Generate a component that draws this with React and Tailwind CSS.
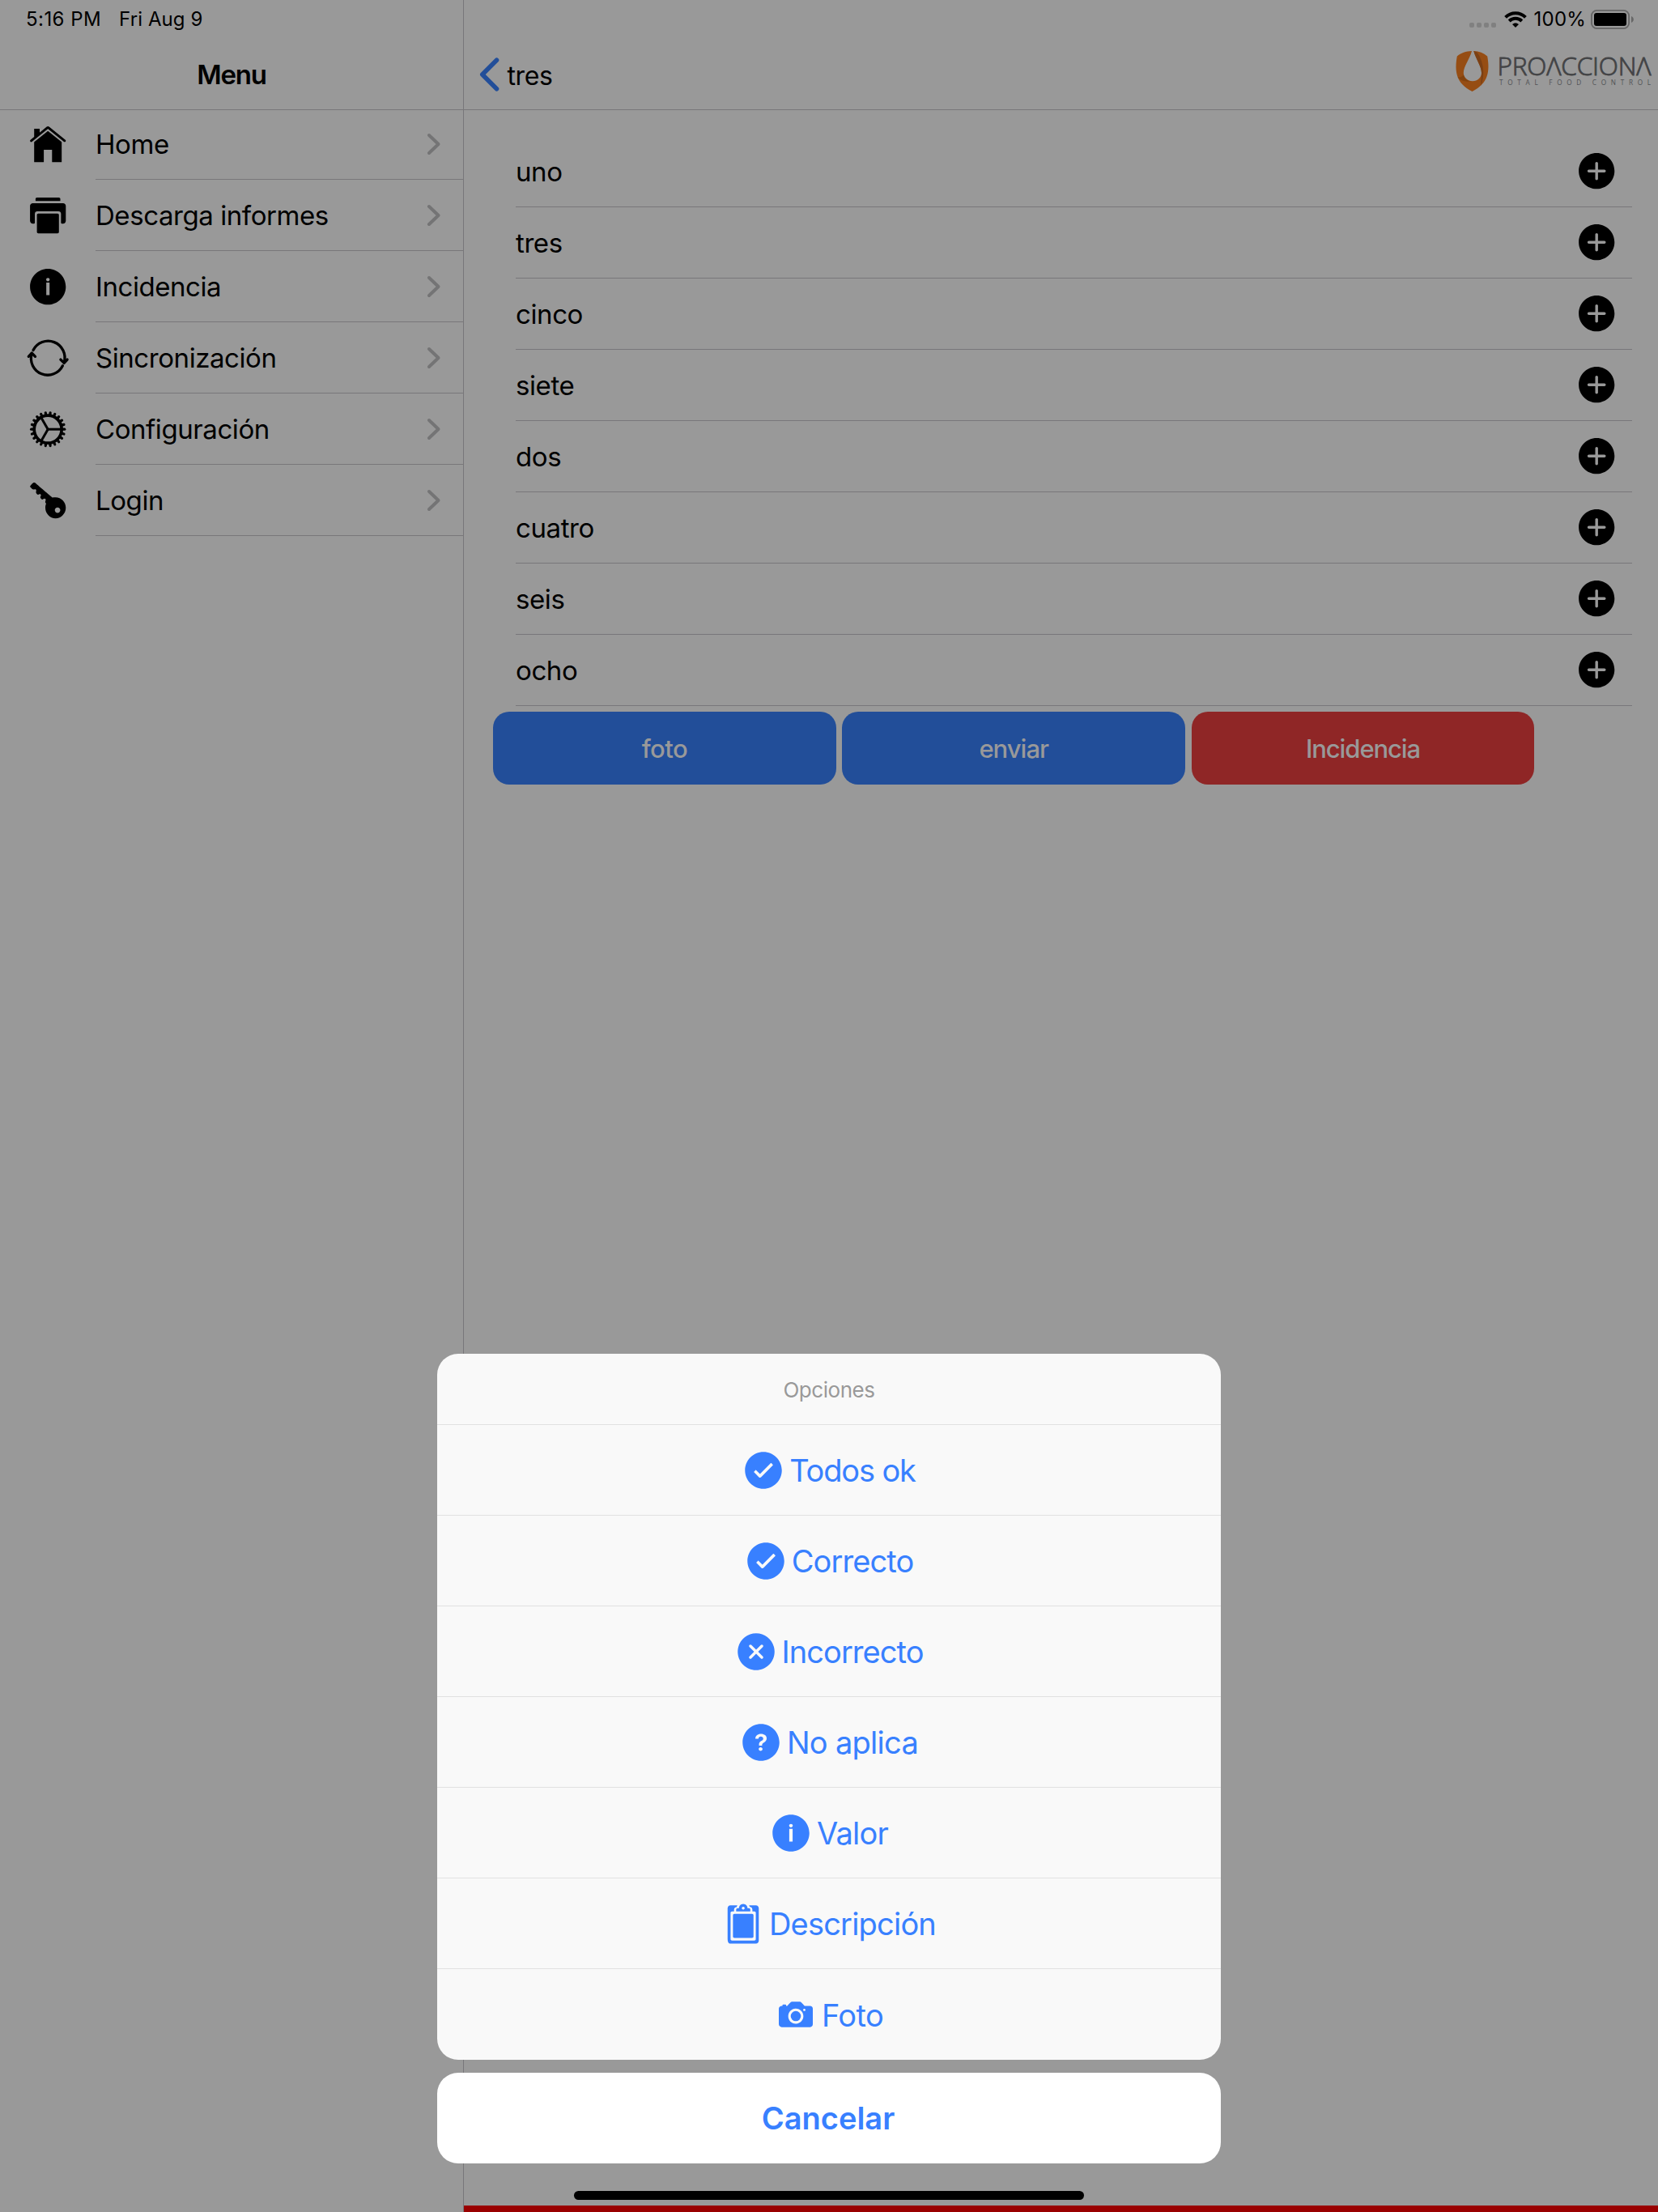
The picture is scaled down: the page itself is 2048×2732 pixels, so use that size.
import React from "react";
import {
  IoIosHome, IoIosPrint, IoIosInformationCircle, IoIosKey,
  IoIosAddCircle, IoIosCheckmarkCircle, IoIosCloseCircle, IoIosHelpCircle, IoIosClipboard, IoIosCamera,
} from "react-icons/io";

function SyncIcon({ className }) {
  return (
    <svg className={className} viewBox="-27.2 -27.2 54.4 54.4" fill="none" stroke="currentColor" strokeWidth="3.300" strokeLinecap="round" strokeLinejoin="round">
      <path d="M-18.200 -9.600A20.600 20.600 0 0 1 20 5.400" />
      <path d="M15.700 1.900L20 6.200L23.900 1.900" />
      <path d="M18.200 9.600A20.600 20.600 0 0 1 -20 -5.400" />
      <path d="M-15.700 -1.900L-20 -6.200L-23.900 -1.900" />
    </svg>
  );
}

const TEETH = Array.from({ length: 22 }, (_, n) => (n * 360) / 22);

function GearIcon({ className }) {
  return (
    <svg className={className} viewBox="-27.2 -27.2 54.4 54.4" fill="none" stroke="currentColor">
      <circle r="17" strokeWidth="3.700" />
      {TEETH.map((a) => (
        <path key={a} d="M18 0H20.600" strokeWidth="3.200" strokeLinecap="round" transform={`rotate(${a})`} />
      ))}
      {[0, 120, 240].map((a) => (
        <path key={a} d="M0 0H17" strokeWidth="3" transform={`rotate(${a})`} />
      ))}
    </svg>
  );
}

const menu = [
  { label: "Home", icon: IoIosHome },
  { label: "Descarga informes", icon: IoIosPrint },
  { label: "Incidencia", icon: IoIosInformationCircle },
  { label: "Sincronización", icon: SyncIcon },
  { label: "Configuración", icon: GearIcon },
  { label: "Login", icon: IoIosKey },
];
const items = ["uno", "tres", "cinco", "siete", "dos", "cuatro", "seis", "ocho"];
const buttons = [
  { label: "foto", look: "bg-[#224e99] tracking-[-0.6px]" },
  { label: "enviar", look: "bg-[#224e99] tracking-[-1px]" },
  { label: "Incidencia", look: "bg-[#8f2626] tracking-[-1.1px]" },
];
const options = [
  { label: "Todos ok", icon: IoIosCheckmarkCircle, track: "tracking-[-1.15px]" },
  { label: "Correcto", icon: IoIosCheckmarkCircle, track: "tracking-[-0.9px]" },
  { label: "Incorrecto", icon: IoIosCloseCircle, track: "tracking-[-0.95px]" },
  { label: "No aplica", icon: IoIosHelpCircle, track: "tracking-[-0.7px]" },
  { label: "Valor", icon: IoIosInformationCircle, track: "tracking-[-0.8px]" },
  { label: "Descripción", icon: IoIosClipboard, track: "tracking-[-0.8px]" },
  { label: "Foto", icon: IoIosCamera, track: "tracking-[-0.6px]" },
];

function Logo() {
  return (
    <svg className="mt-[15px] h-[52px] w-[250px] shrink-0 overflow-visible" viewBox="0 0 250 52" aria-label="PROACCIONA">
      <path d="M20 0C13 .2 6.500 2.500 1.800 6.500C-1.500 25 .5 40 20.500 50C40.500 40 42.500 25 39.200 6.500C34.500 2.500 29 .2 22.300 0C25 10 32 19 32 27C32 33 27 37.200 21 37.200C15 37.200 9.800 33 9.800 27C9.800 19 17.500 10 20 0Z" fill="#964d13" />
      <path d="M22.300 0C25 10 32 19 32 27C32 30 31.300 32.500 31.200 43C36.500 31 35 13 26.500 1.500Z" fill="#7b4014" />
      <path d="M2.500 32C6 37 13 38.500 19 37.200C14.500 37 10.500 33.500 9.900 29C9 31 6 33.500 2.500 32Z" fill="#82430f" />
      <text x="51.500" y="29.500" textLength="190" fontSize="31.500" fontWeight="300" fontFamily="'Open Sans', 'Noto Sans', sans-serif" fill="#434446" stroke="#434446" strokeWidth=".9">PROΛCCIONΛ</text>
      <text x="54" y="42" textLength="187" fontSize="8.200" fontFamily="'Open Sans', 'Noto Sans', sans-serif" fill="#505154">TOTAL FOOD CONTROL</text>
    </svg>
  );
}

export default function App() {
  return (
    <div className="relative flex h-[2732px] w-[2048px] overflow-hidden bg-[#999] font-['Inter',sans-serif] text-black">
      <aside className="flex w-[573px] shrink-0 flex-col border-r border-[#78777a]">
        <header className="flex h-[136px] flex-col border-b border-[#78777a]">
          <div className="flex h-12 items-center gap-[22px] pl-8 text-[24px]">
            <span className="tracking-[0.45px]">5:16 PM</span>
            <span className="tracking-[0.1px]">Fri Aug 9</span>
          </div>
          <h1 className="flex h-[87px] items-center justify-center pt-[2px] text-[33px] font-semibold tracking-[-1.2px]">Menu</h1>
        </header>
        <nav className="-mt-[2px]">
          {menu.map(({ label, icon: Icon }) => (
            <div key={label} className="flex h-[88px] items-center pl-8">
              <Icon className="size-[54.4px] shrink-0" />
              <div className="ml-[31.600px] flex h-full grow items-center justify-between border-b border-[#78777a] pr-[26px]">
                <span className="pt-[2px] text-[33px] tracking-[-0.43px]">{label}</span>
                <svg className="h-[30px] w-5" viewBox="0 0 20 30" fill="none" stroke="#747475" strokeWidth="4" strokeLinecap="round" strokeLinejoin="round">
                  <path d="M4 4L15.500 15L4 26" />
                </svg>
              </div>
            </div>
          ))}
        </nav>
      </aside>

      <main className="flex grow flex-col">
        <header className="flex h-[136px] flex-col border-b border-[#78777a]">
          <div className="flex h-12 items-center justify-end pr-[29px]">
            <div className="mt-[14px] mr-[10px] flex gap-[3px]">
              {[0, 1, 2, 3].map((n) => <i key={n} className="size-[6px] rounded-[2px] bg-[#808080]" />)}
            </div>
            <svg className="h-[20px] w-[28px]" viewBox="0 0 28 20" fill="none" stroke="black" strokeWidth="4">
              <path d="M1.600 7.300C8.500 .5 19.500 .5 26.400 7.300" />
              <path d="M6.200 12C10.500 7.800 17.500 7.800 21.800 12" />
              <path d="M10 16.100C12.300 14 15.700 14 18 16.100L14 20Z" fill="black" stroke="none" />
            </svg>
            <span className="ml-[9px] text-[24px] tracking-[0.2px]">100%</span>
            <svg className="ml-[6px] h-6 w-[54px]" viewBox="0 0 54 24">
              <rect x=".9" y=".9" width="46.200" height="22.200" rx="6.500" fill="none" stroke="#666" strokeWidth="1.800" />
              <rect x="4" y="4" width="40" height="16" rx="3" fill="black" />
              <path d="M50 8c3.800 1.500 3.800 6.500 0 8Z" fill="#666" />
            </svg>
          </div>
          <div className="flex h-[87px] justify-between">
            <div className="flex items-center pl-[18px]">
              <svg className="h-[44px] w-[28px]" viewBox="0 0 28 44" fill="none" stroke="#224e99" strokeWidth="5.600" strokeLinecap="round" strokeLinejoin="round">
                <path d="M22.500 4.300L4.800 22L22.500 39.700" />
              </svg>
              <span className="ml-[7.500px] pt-[4px] text-[32px] tracking-[-0.4px]">tres</span>
            </div>
            <Logo />
          </div>
        </header>
        <section className="mt-8 pl-16 pr-8">
          {items.map((label) => (
            <div key={label} className="flex h-[88px] items-center justify-between border-b border-[#78777a] pr-[16.500px]">
              <span className="pt-[2px] text-[33px] tracking-[-0.4px]">{label}</span>
              <IoIosAddCircle className="size-[54.4px]" />
            </div>
          ))}
        </section>
        <div className="mt-[7px] ml-9 flex gap-[7.5px]">
          {buttons.map(({ label, look }) => (
            <button key={label} className={`h-[90px] w-[423.800px] rounded-[20px] pt-[2px] text-[31px] font-medium text-[#999] ${look}`}>{label}</button>
          ))}
        </div>
        <div className="mt-auto h-2 bg-[#990000]" />
      </main>

      <div className="absolute bottom-[60px] left-[540px] flex w-[968px] flex-col gap-4 text-[#3880ff]">
        <div className="overflow-hidden rounded-[26px] bg-[#f9f9f9]">
          <div className="flex h-[88px] items-center justify-center border-b border-[#e1e1e1] pt-[2px] text-[26px] tracking-[-0.45px] text-[#999]">Opciones</div>
          {options.map(({ label, icon: Icon, track }) => (
            <div key={label} className="flex h-28 items-center justify-center border-b border-[#e1e1e1] pr-[2px] text-[38px] last:border-b-0">
              <Icon className="size-[56px]" />
              <span className={`ml-[4px] pt-[2px] ${track}`}>{label}</span>
            </div>
          ))}
        </div>
        <button className="h-28 rounded-[26px] bg-white pr-[2px] text-[38px] font-semibold">Cancelar</button>
      </div>
      <div className="absolute bottom-[15px] left-[709px] h-[11px] w-[630px] rounded-full bg-black" />
    </div>
  );
}
